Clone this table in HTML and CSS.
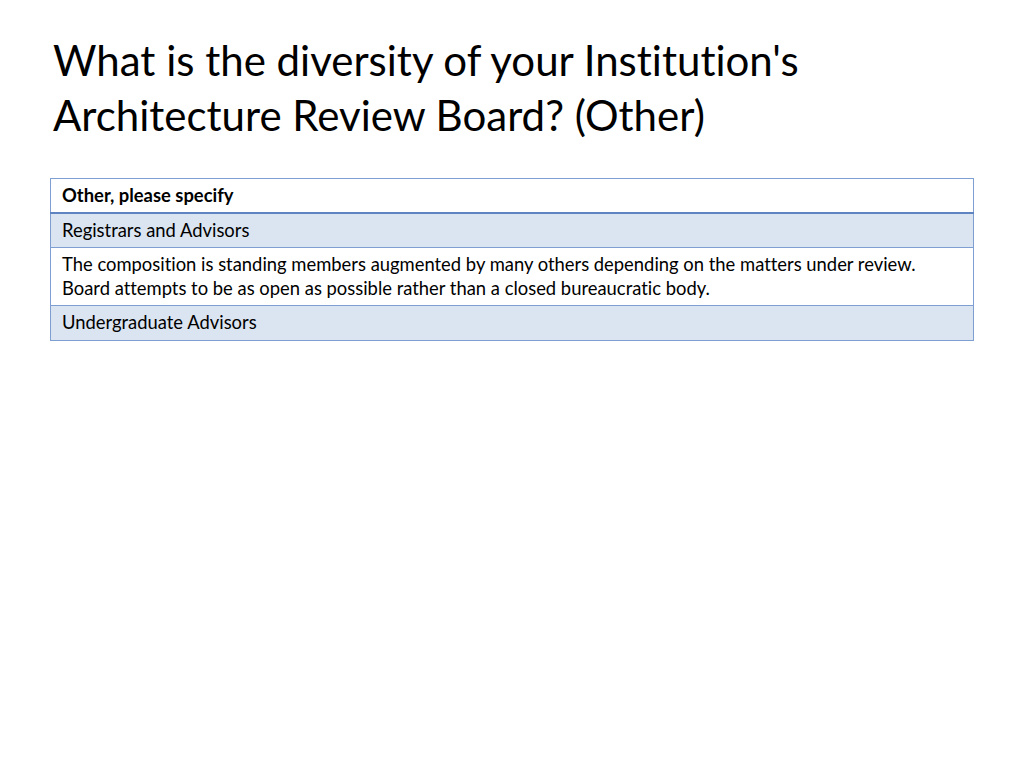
FILE: index.html
```html
<!DOCTYPE html>
<html>
<head>
<meta charset="utf-8">
<link rel="stylesheet" href="styles.css">
</head>
<body>
<div class="slide">
  <h1 class="title">What is the diversity of your Institution's Architecture Review Board? (Other)</h1>
  <table class="grid">
    <thead>
      <tr><th>Other, please specify</th></tr>
    </thead>
    <tbody>
      <tr class="band"><td>Registrars and Advisors</td></tr>
      <tr><td>The composition is standing members augmented by many others depending on the matters under review.<br>Board attempts to be as open as possible rather than a closed bureaucratic body.</td></tr>
      <tr class="band last"><td>Undergraduate Advisors</td></tr>
    </tbody>
  </table>
</div>
</body>
</html>
```

FILE: styles.css
```css
html, body {
  margin: 0;
  padding: 0;
  background: #ffffff;
}
.slide {
  width: 1024px;
  height: 768px;
  padding: 33px 50px 0 50px;
  box-sizing: border-box;
  font-family: "Lato", "Open Sans", sans-serif;
  font-variant-ligatures: none;
  color: #000;
}
.title {
  margin: 0 0 0 3px;
  font-weight: normal;
  font-size: 42px;
  line-height: 55px;
  width: 900px;
}
.grid {
  margin-top: 35px;
  width: 924px;
  border-collapse: collapse;
  border: 1px solid #7f9fd3;
  font-size: 18.4px;
}
.grid th {
  text-align: left;
  font-weight: bold;
  background: #fff;
  padding: 6px 11px 6px;
  line-height: 21px;
  border-bottom: 2px solid #5f84c2;
}
.grid td {
  padding: 4px 11px 5px;
  line-height: 24px;
  border-top: 1px solid #7f9fd3;
}
.grid tr.band td {
  background: #dbe5f1;
  padding: 6px 11px 6px;
  line-height: 21px;
}
.grid tr.last td {
  padding-bottom: 7px;
}
```
